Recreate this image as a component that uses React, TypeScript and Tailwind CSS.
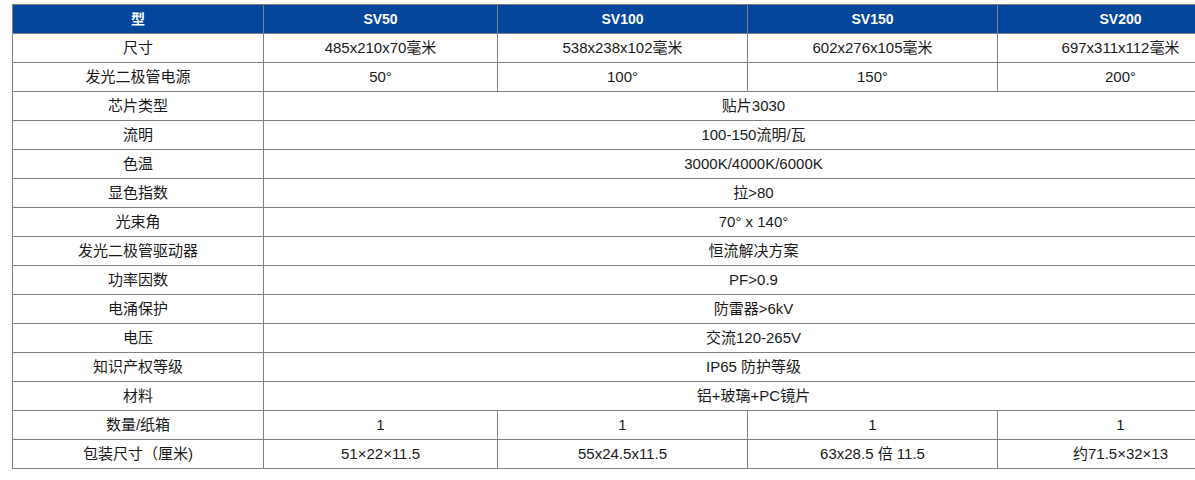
import React from "react";

const font = { fontFamily: '"Liberation Sans", Arial, "Noto Sans CJK SC", sans-serif' };

type Row = { label: string; values: string[] | string };

const rows: Row[] = [
  { label: "尺寸", values: ["485x210x70毫米", "538x238x102毫米", "602x276x105毫米", "697x311x112毫米"] },
  { label: "发光二极管电源", values: ["50°", "100°", "150°", "200°"] },
  { label: "芯片类型", values: "贴片3030" },
  { label: "流明", values: "100-150流明/瓦" },
  { label: "色温", values: "3000K/4000K/6000K" },
  { label: "显色指数", values: "拉>80" },
  { label: "光束角", values: "70° x 140°" },
  { label: "发光二极管驱动器", values: "恒流解决方案" },
  { label: "功率因数", values: "PF>0.9" },
  { label: "电涌保护", values: "防雷器>6kV" },
  { label: "电压", values: "交流120-265V" },
  { label: "知识产权等级", values: "IP65 防护等级" },
  { label: "材料", values: "铝+玻璃+PC镜片" },
  { label: "数量/纸箱", values: ["1", "1", "1", "1"] },
  { label: "包装尺寸（厘米)", values: ["51×22×11.5", "55x24.5x11.5", "63x28.5 倍 11.5", "约71.5×32×13"] },
];

const cell = "border border-[#808080] h-[29px] p-0 text-center align-middle";

export default function App() {
  return (
    <div className="w-[1195px] h-[480px] overflow-hidden bg-white" style={font}>
      <div className="pl-[12px] pt-[4px]">
        <table className="border-collapse table-fixed w-[1231px] text-[15px] text-[#1a1a1a]">
          <colgroup>
            <col className="w-[251px]" />
            <col className="w-[234px]" />
            <col className="w-[250px]" />
            <col className="w-[250px]" />
            <col className="w-[246px]" />
          </colgroup>
          <thead>
            <tr className="bg-[#03479c] text-white">
              <th className={`${cell} text-[14px] font-bold`}>型</th>
              <th className={`${cell} text-[14px] font-bold`}>SV50</th>
              <th className={`${cell} text-[14px] font-bold`}>SV100</th>
              <th className={`${cell} text-[14px] font-bold`}>SV150</th>
              <th className={`${cell} text-[14px] font-bold`}>SV200</th>
            </tr>
          </thead>
          <tbody>
            {rows.map((r) => (
              <tr key={r.label}>
                <td className={cell}>{r.label}</td>
                {Array.isArray(r.values) ? (
                  r.values.map((v, i) => (
                    <td key={i} className={cell}>
                      {v}
                    </td>
                  ))
                ) : (
                  <td className={cell} colSpan={4}>
                    {r.values}
                  </td>
                )}
              </tr>
            ))}
          </tbody>
        </table>
      </div>
    </div>
  );
}
